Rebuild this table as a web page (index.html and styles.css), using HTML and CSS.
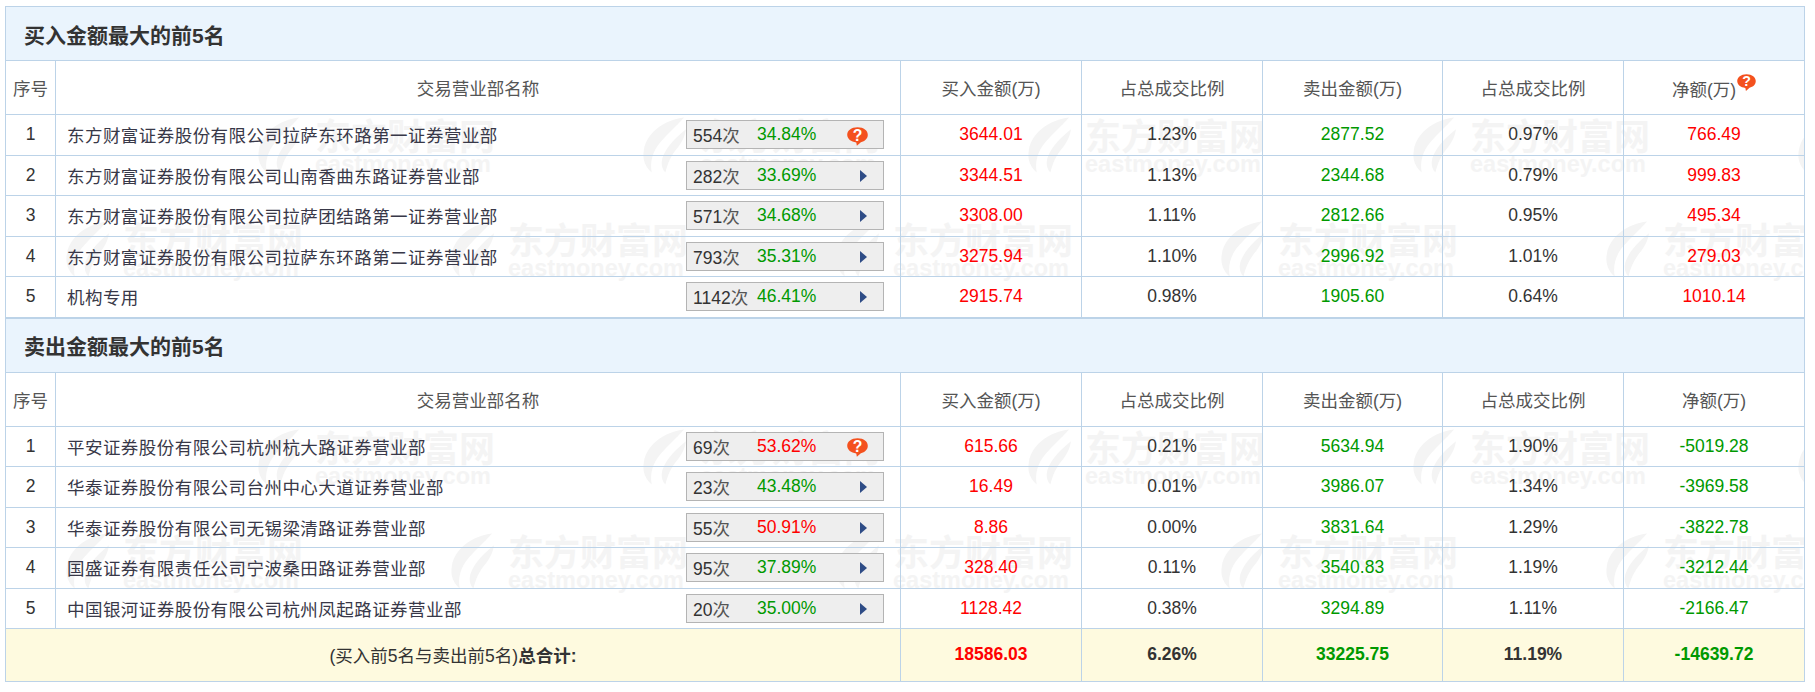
FILE: index.html
```html
<!DOCTYPE html>
<html lang="zh-CN">
<head>
<meta charset="utf-8">
<title>龙虎榜 - 营业部明细</title>
<link rel="stylesheet" href="styles.css">
</head>
<body>
<svg class="defs" width="0" height="0" aria-hidden="true">
  <defs>
    <symbol id="wm-logo" viewBox="0 0 50 60">
      <path d="M47 3 C28 5 9 18 6 36 C4 46 8 54 14 59 C12 48 15 37 23 28 C30 20 39 12 47 3 Z"/>
      <path d="M49 15 C39 23 29 33 25 44 C23 51 25 56 28 59 C30 50 34 41 41 33 C45 28 48 22 49 15 Z"/>
    </symbol>
    <symbol id="q-bubble" viewBox="0 0 20 18">
      <path d="M10 0.2 C16 0.2 19.8 3.4 19.8 7.4 C19.8 11.2 17 13.6 13.2 14.5 L9.4 17.9 L8.8 14.7 C3.8 14.2 0.2 11.3 0.2 7.4 C0.2 3.4 4.2 0.2 10 0.2 Z" fill="#f4511e"/>
      <text x="10" y="12.9" text-anchor="middle" font-family="Liberation Sans, sans-serif" font-size="15" font-weight="700" fill="#ffffff">?</text>
    </symbol>
    <symbol id="arrow" viewBox="0 0 7 12">
      <polygon points="0,0 7,6 0,12" fill="#2e4c86"/>
    </symbol>
  </defs>
</svg>

<div class="board">
  <!-- ===== 买入 ===== -->
  <section class="block">
    <div class="wm" aria-hidden="true">
      <div class="wm-band wm-a">
        <div class="wm-item"><svg class="wm-logo"><use href="#wm-logo"/></svg><div class="wm-text"><span class="wm-cn">东方财富网</span><span class="wm-en">eastmoney.com</span></div></div>
        <div class="wm-item"><svg class="wm-logo"><use href="#wm-logo"/></svg><div class="wm-text"><span class="wm-cn">东方财富网</span><span class="wm-en">eastmoney.com</span></div></div>
        <div class="wm-item"><svg class="wm-logo"><use href="#wm-logo"/></svg><div class="wm-text"><span class="wm-cn">东方财富网</span><span class="wm-en">eastmoney.com</span></div></div>
        <div class="wm-item"><svg class="wm-logo"><use href="#wm-logo"/></svg><div class="wm-text"><span class="wm-cn">东方财富网</span><span class="wm-en">eastmoney.com</span></div></div>
        <div class="wm-item"><svg class="wm-logo"><use href="#wm-logo"/></svg><div class="wm-text"><span class="wm-cn">东方财富网</span><span class="wm-en">eastmoney.com</span></div></div>
      </div>
      <div class="wm-band wm-b">
        <div class="wm-item"><svg class="wm-logo"><use href="#wm-logo"/></svg><div class="wm-text"><span class="wm-cn">东方财富网</span><span class="wm-en">eastmoney.com</span></div></div>
        <div class="wm-item"><svg class="wm-logo"><use href="#wm-logo"/></svg><div class="wm-text"><span class="wm-cn">东方财富网</span><span class="wm-en">eastmoney.com</span></div></div>
        <div class="wm-item"><svg class="wm-logo"><use href="#wm-logo"/></svg><div class="wm-text"><span class="wm-cn">东方财富网</span><span class="wm-en">eastmoney.com</span></div></div>
        <div class="wm-item"><svg class="wm-logo"><use href="#wm-logo"/></svg><div class="wm-text"><span class="wm-cn">东方财富网</span><span class="wm-en">eastmoney.com</span></div></div>
        <div class="wm-item"><svg class="wm-logo"><use href="#wm-logo"/></svg><div class="wm-text"><span class="wm-cn">东方财富网</span><span class="wm-en">eastmoney.com</span></div></div>
      </div>
    </div>
    <table class="lhb">
      <colgroup>
        <col class="c-no"><col class="c-name"><col class="c-n181"><col class="c-n181"><col class="c-n180"><col class="c-n181"><col class="c-n181">
      </colgroup>
      <thead>
        <tr class="cap"><th colspan="7">买入金额最大的前5名</th></tr>
        <tr class="colhead">
          <th>序号</th><th>交易营业部名称</th><th>买入金额(万)</th><th>占总成交比例</th><th>卖出金额(万)</th><th>占总成交比例</th>
          <th>净额(万)<svg class="hd-q"><use href="#q-bubble"/></svg></th>
        </tr>
      </thead>
      <tbody>
        <tr class="row">
          <td>1</td>
          <td class="name-cell"><div class="name-wrap"><span class="name">东方财富证券股份有限公司拉萨东环路第一证券营业部</span><span class="badge"><span class="cnt">554<i>次</i></span><span class="pct green">34.84%</span><svg class="b-q"><use href="#q-bubble"/></svg></span></div></td>
          <td class="red">3644.01</td><td>1.23%</td><td class="green">2877.52</td><td>0.97%</td><td class="red">766.49</td>
        </tr>
        <tr class="row">
          <td>2</td>
          <td class="name-cell"><div class="name-wrap"><span class="name">东方财富证券股份有限公司山南香曲东路证券营业部</span><span class="badge"><span class="cnt">282<i>次</i></span><span class="pct green">33.69%</span><svg class="b-arrow"><use href="#arrow"/></svg></span></div></td>
          <td class="red">3344.51</td><td>1.13%</td><td class="green">2344.68</td><td>0.79%</td><td class="red">999.83</td>
        </tr>
        <tr class="row">
          <td>3</td>
          <td class="name-cell"><div class="name-wrap"><span class="name">东方财富证券股份有限公司拉萨团结路第一证券营业部</span><span class="badge"><span class="cnt">571<i>次</i></span><span class="pct green">34.68%</span><svg class="b-arrow"><use href="#arrow"/></svg></span></div></td>
          <td class="red">3308.00</td><td>1.11%</td><td class="green">2812.66</td><td>0.95%</td><td class="red">495.34</td>
        </tr>
        <tr class="row">
          <td>4</td>
          <td class="name-cell"><div class="name-wrap"><span class="name">东方财富证券股份有限公司拉萨东环路第二证券营业部</span><span class="badge"><span class="cnt">793<i>次</i></span><span class="pct green">35.31%</span><svg class="b-arrow"><use href="#arrow"/></svg></span></div></td>
          <td class="red">3275.94</td><td>1.10%</td><td class="green">2996.92</td><td>1.01%</td><td class="red">279.03</td>
        </tr>
        <tr class="row">
          <td>5</td>
          <td class="name-cell"><div class="name-wrap"><span class="name">机构专用</span><span class="badge"><span class="cnt">1142<i>次</i></span><span class="pct green">46.41%</span><svg class="b-arrow"><use href="#arrow"/></svg></span></div></td>
          <td class="red">2915.74</td><td>0.98%</td><td class="green">1905.60</td><td>0.64%</td><td class="red">1010.14</td>
        </tr>
      </tbody>
    </table>
  </section>

  <!-- ===== 卖出 ===== -->
  <section class="block">
    <div class="wm" aria-hidden="true">
      <div class="wm-band wm-a">
        <div class="wm-item"><svg class="wm-logo"><use href="#wm-logo"/></svg><div class="wm-text"><span class="wm-cn">东方财富网</span><span class="wm-en">eastmoney.com</span></div></div>
        <div class="wm-item"><svg class="wm-logo"><use href="#wm-logo"/></svg><div class="wm-text"><span class="wm-cn">东方财富网</span><span class="wm-en">eastmoney.com</span></div></div>
        <div class="wm-item"><svg class="wm-logo"><use href="#wm-logo"/></svg><div class="wm-text"><span class="wm-cn">东方财富网</span><span class="wm-en">eastmoney.com</span></div></div>
        <div class="wm-item"><svg class="wm-logo"><use href="#wm-logo"/></svg><div class="wm-text"><span class="wm-cn">东方财富网</span><span class="wm-en">eastmoney.com</span></div></div>
        <div class="wm-item"><svg class="wm-logo"><use href="#wm-logo"/></svg><div class="wm-text"><span class="wm-cn">东方财富网</span><span class="wm-en">eastmoney.com</span></div></div>
      </div>
      <div class="wm-band wm-b">
        <div class="wm-item"><svg class="wm-logo"><use href="#wm-logo"/></svg><div class="wm-text"><span class="wm-cn">东方财富网</span><span class="wm-en">eastmoney.com</span></div></div>
        <div class="wm-item"><svg class="wm-logo"><use href="#wm-logo"/></svg><div class="wm-text"><span class="wm-cn">东方财富网</span><span class="wm-en">eastmoney.com</span></div></div>
        <div class="wm-item"><svg class="wm-logo"><use href="#wm-logo"/></svg><div class="wm-text"><span class="wm-cn">东方财富网</span><span class="wm-en">eastmoney.com</span></div></div>
        <div class="wm-item"><svg class="wm-logo"><use href="#wm-logo"/></svg><div class="wm-text"><span class="wm-cn">东方财富网</span><span class="wm-en">eastmoney.com</span></div></div>
        <div class="wm-item"><svg class="wm-logo"><use href="#wm-logo"/></svg><div class="wm-text"><span class="wm-cn">东方财富网</span><span class="wm-en">eastmoney.com</span></div></div>
      </div>
    </div>
    <table class="lhb">
      <colgroup>
        <col class="c-no"><col class="c-name"><col class="c-n181"><col class="c-n181"><col class="c-n180"><col class="c-n181"><col class="c-n181">
      </colgroup>
      <thead>
        <tr class="cap"><th colspan="7">卖出金额最大的前5名</th></tr>
        <tr class="colhead">
          <th>序号</th><th>交易营业部名称</th><th>买入金额(万)</th><th>占总成交比例</th><th>卖出金额(万)</th><th>占总成交比例</th><th>净额(万)</th>
        </tr>
      </thead>
      <tbody>
        <tr class="row">
          <td>1</td>
          <td class="name-cell"><div class="name-wrap"><span class="name">平安证券股份有限公司杭州杭大路证券营业部</span><span class="badge"><span class="cnt">69<i>次</i></span><span class="pct red">53.62%</span><svg class="b-q"><use href="#q-bubble"/></svg></span></div></td>
          <td class="red">615.66</td><td>0.21%</td><td class="green">5634.94</td><td>1.90%</td><td class="green">-5019.28</td>
        </tr>
        <tr class="row">
          <td>2</td>
          <td class="name-cell"><div class="name-wrap"><span class="name">华泰证券股份有限公司台州中心大道证券营业部</span><span class="badge"><span class="cnt">23<i>次</i></span><span class="pct green">43.48%</span><svg class="b-arrow"><use href="#arrow"/></svg></span></div></td>
          <td class="red">16.49</td><td>0.01%</td><td class="green">3986.07</td><td>1.34%</td><td class="green">-3969.58</td>
        </tr>
        <tr class="row">
          <td>3</td>
          <td class="name-cell"><div class="name-wrap"><span class="name">华泰证券股份有限公司无锡梁清路证券营业部</span><span class="badge"><span class="cnt">55<i>次</i></span><span class="pct red">50.91%</span><svg class="b-arrow"><use href="#arrow"/></svg></span></div></td>
          <td class="red">8.86</td><td>0.00%</td><td class="green">3831.64</td><td>1.29%</td><td class="green">-3822.78</td>
        </tr>
        <tr class="row">
          <td>4</td>
          <td class="name-cell"><div class="name-wrap"><span class="name">国盛证券有限责任公司宁波桑田路证券营业部</span><span class="badge"><span class="cnt">95<i>次</i></span><span class="pct green">37.89%</span><svg class="b-arrow"><use href="#arrow"/></svg></span></div></td>
          <td class="red">328.40</td><td>0.11%</td><td class="green">3540.83</td><td>1.19%</td><td class="green">-3212.44</td>
        </tr>
        <tr class="row">
          <td>5</td>
          <td class="name-cell"><div class="name-wrap"><span class="name">中国银河证券股份有限公司杭州凤起路证券营业部</span><span class="badge"><span class="cnt">20<i>次</i></span><span class="pct green">35.00%</span><svg class="b-arrow"><use href="#arrow"/></svg></span></div></td>
          <td class="red">1128.42</td><td>0.38%</td><td class="green">3294.89</td><td>1.11%</td><td class="green">-2166.47</td>
        </tr>
      </tbody>
      <tfoot>
        <tr class="total">
          <td colspan="2">(买入前5名与卖出前5名)<b>总合计:</b></td>
          <td class="red">18586.03</td><td>6.26%</td><td class="green">33225.75</td><td>11.19%</td><td class="green">-14639.72</td>
        </tr>
      </tfoot>
    </table>
  </section>
</div>
</body>
</html>
```

FILE: styles.css
```css
* { box-sizing: border-box; }

html, body {
  margin: 0;
  background: #ffffff;
}

body {
  font-family: "Liberation Sans", "Noto Sans CJK SC", sans-serif;
  font-size: 17.5px;
  color: #333333;
}

.defs {
  position: absolute;
  width: 0;
  height: 0;
  overflow: hidden;
}

.board {
  padding: 6px 0 0 5px;
  width: 1815px;
}

.block {
  position: relative;
  width: 1800px;
}

/* ---------- watermark underlay ---------- */
.wm {
  position: absolute;
  inset: 0;
  overflow: hidden;
  display: flex;
  flex-direction: column;
  padding-top: 108px;
  gap: 42px;
  color: #f4f4f4;
  pointer-events: none;
  z-index: 0;
}

.wm-band {
  display: flex;
  gap: 143px;
  flex: none;
}

.wm-a { padding-left: 248px; }
.wm-b { padding-left: 56px; }

.wm-item {
  display: flex;
  gap: 13px;
  flex: none;
  width: 242px;
}

.wm-logo {
  width: 49px;
  height: 60px;
  flex: none;
  fill: currentColor;
}

.wm-text {
  display: flex;
  flex-direction: column;
  width: 180px;
}

.wm-cn {
  font-family: "Noto Sans CJK SC", sans-serif;
  font-size: 36px;
  font-weight: 700;
  line-height: 36px;
  margin-top: 2px;
  white-space: nowrap;
}

.wm-en {
  font-family: "Liberation Sans", sans-serif;
  font-size: 23.5px;
  font-weight: 700;
  line-height: 24px;
  white-space: nowrap;
}

/* ---------- table ---------- */
.lhb {
  position: relative;
  z-index: 1;
  width: 1800px;
  table-layout: fixed;
  border-collapse: separate;
  border-spacing: 0;
  border-top: 1px solid #bcd3e8;
  border-left: 1px solid #bcd3e8;
}

.c-no { width: 50px; }
.c-name { width: 845px; }
.c-n181 { width: 181px; }
.c-n180 { width: 180px; }

.lhb th,
.lhb td {
  border-right: 1px solid #bcd3e8;
  border-bottom: 1px solid #bcd3e8;
  padding: 0;
  text-align: center;
  vertical-align: middle;
  font-weight: 400;
  white-space: nowrap;
}

.cap { height: 54px; }

.lhb .cap th {
  background: #eaf4fd;
  text-align: left;
  padding-left: 18px;
  font-size: 21px;
  font-weight: 700;
  color: #333333;
}

.colhead { height: 54px; }

.colhead th {
  color: #555555;
  background: #ffffff;
}

.hd-q {
  width: 19px;
  height: 17px;
  vertical-align: 5px;
  margin-left: 1px;
}

.row { height: 40.5px; }

.row td { color: #333333; }

.lhb td.name-cell {
  text-align: left;
  padding: 0 16px 0 11px;
}

.name-wrap {
  display: flex;
  align-items: center;
  justify-content: space-between;
}

.name {
  color: #383848;
  letter-spacing: 0.45px;
}

.badge {
  display: flex;
  align-items: center;
  flex: none;
  width: 198px;
  height: 29px;
  border: 1px solid #b4b4b4;
  background: #eeeeee;
  padding: 0 16px 0 6px;
  text-align: left;
}

.cnt {
  width: 64px;
  flex: none;
  color: #333333;
}

.cnt i {
  font-style: normal;
  color: #555555;
}

.pct { flex: none; }

.b-q {
  flex: none;
  width: 21px;
  height: 19px;
  margin-left: auto;
  margin-right: -1px;
  margin-top: 3px;
}

.b-arrow {
  flex: none;
  width: 7px;
  height: 12px;
  margin-left: auto;
  margin-top: 1px;
}

.lhb td.red,
.pct.red { color: #ff0000; }

.lhb td.green,
.pct.green { color: #009900; }

.total {
  height: 52.5px;
}

.total td {
  background: #fefadf;
  font-weight: 700;
  color: #333333;
}

.lhb .total td:first-child {
  font-weight: 400;
}

.total b {
  font-weight: 700;
}
```
